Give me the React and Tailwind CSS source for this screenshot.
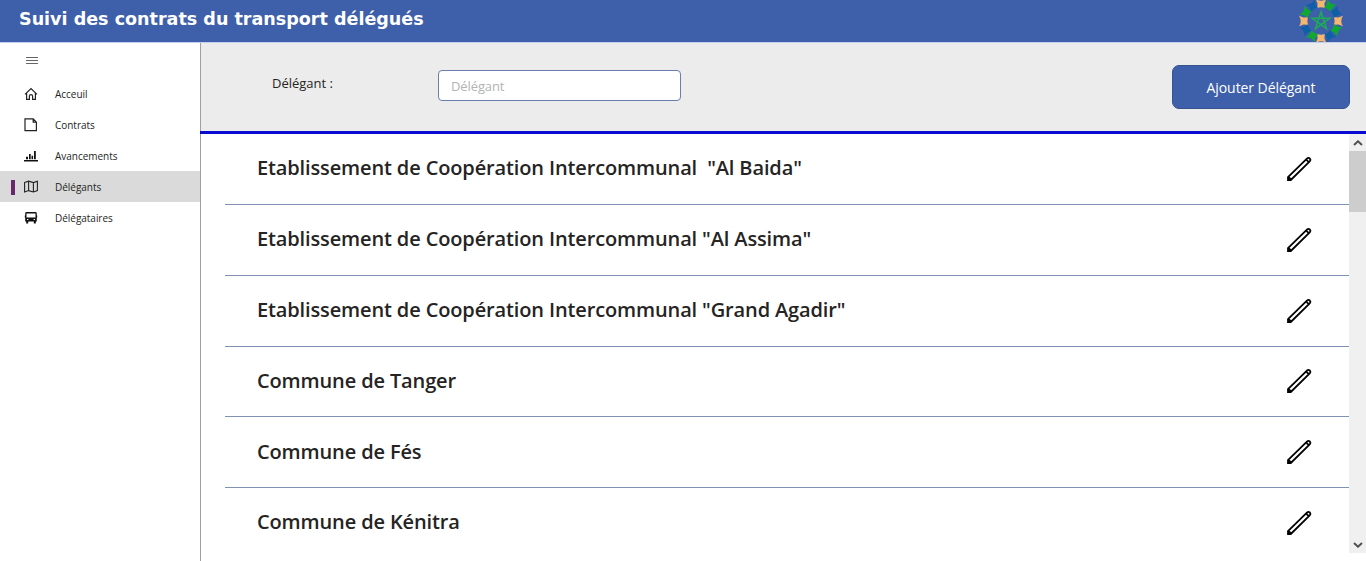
import React from "react";

const petalColors = ["#f5b670", "#0fa832", "#0f5fa8"];

function Emblem() {
  return (
    <svg className="h-[42px] w-[46px] shrink-0" viewBox="-23 -21 46 42">
      {Array.from({ length: 12 }, (_, i) => (
        <path
          key={i}
          d="M-5.3 -22 Q0 -18.4 5.3 -22 L3.4 -17.6 L3.8 -13 Q0 -14.4 -3.8 -13 L-3.4 -17.6 Z"
          fill={petalColors[i % 3]}
          transform={`rotate(${i * 30})`}
        />
      ))}
      <path d="M0 -9 L5.5 7.6 L-8.7 -2.7 H8.7 L-5.5 7.6 Z" fill="none" stroke="#1fab55" strokeWidth="1.6" />
    </svg>
  );
}

const icons = {
  home: (
    <path d="M1 7.4 L7 1.6 L13 7.4 M2.6 6.2 V12.4 H5.4 V9.2 Q5.4 7.6 7 7.6 Q8.6 7.6 8.6 9.2 V12.4 H11.4 V6.2" fill="none" stroke="#222" strokeWidth="1.2" />
  ),
  file: <path d="M1 0.9 H9.2 L12.4 4.2 V12.6 H1 Z M9.2 0.9 V4.2 H12.4" fill="none" stroke="#222" strokeWidth="1.2" />,
  chart: <path d="M0 11 H14 V12.4 H0 Z M2 7.8 H4 V10.2 H2 Z M5 5 H6.7 V10.2 H5 Z M7.5 6.8 H9.1 V10.2 H7.5 Z M10 2 H11.8 V10.2 H10 Z" fill="#111" />,
  map: <path d="M0.6 2.6 L4.6 1.2 L9.4 2.6 L13.4 1.2 V10.6 L9.4 12 L4.6 10.6 L0.6 12 Z M4.6 1.2 V10.6 M9.4 2.6 V12" fill="none" stroke="#222" strokeWidth="1.1" />,
  bus: (
    <path
      d="M2.6 1 H11.4 Q12.8 1 12.8 2.4 V4.4 H13.2 V6.6 H12.8 V10.6 H11.8 V12.4 H9.8 V10.6 H4.2 V12.4 H2.2 V10.6 H1.2 V6.6 H0.8 V4.4 H1.2 V2.4 Q1.2 1 2.6 1 Z M2.5 2.6 V6.4 H11.5 V2.6 Z M3 8 V9 H4.4 V8 Z M9.6 8 V9 H11 V8 Z"
      fill="#111"
      fillRule="evenodd"
    />
  ),
};

const menu = [
  ["home", "Acceuil"],
  ["file", "Contrats"],
  ["chart", "Avancements"],
  ["map", "Délégants"],
  ["bus", "Délégataires"],
];

const rows = [
  'Etablissement de Coopération Intercommunal  "Al Baida"',
  'Etablissement de Coopération Intercommunal "Al Assima"',
  'Etablissement de Coopération Intercommunal "Grand Agadir"',
  "Commune de Tanger",
  "Commune de Fés",
  "Commune de Kénitra",
];

function Pencil() {
  return (
    <svg className="h-[26px] w-[26px]" viewBox="0 0 26 26" fill="none" stroke="#000" strokeWidth="1.8">
      <path d="M2 24 V21.2 L20.9 2.6 Q22.4 1.3 23.8 2.5 Q25 3.9 23.7 5.3 L4.8 24 Z M2.4 20.8 L5.2 23.6 M20 3.4 L22.8 6.2" />
    </svg>
  );
}

export default function App() {
  return (
    <div className="flex h-[561px] w-[1366px] flex-col overflow-hidden bg-white font-['Open_Sans',sans-serif] text-[#252423]">
      <header className="flex h-[43px] shrink-0 items-start justify-between border-b border-[#c3cff0] bg-[#3e60aa] pr-[22px] pl-[19px]">
        <h1 className="pt-[7px] font-['DejaVu_Sans',sans-serif] text-[17.55px] leading-[24px] font-bold whitespace-nowrap text-white">
          Suivi des contrats du transport délégués
        </h1>
        <Emblem />
      </header>
      <div className="flex min-h-0 flex-1">
        <aside className="w-[200px] shrink-0">
          <div className="flex h-[35px] items-center pl-[26px]">
            <svg className="h-[9px] w-3" viewBox="0 0 12 9">
              <path d="M0 1.5 H12 M0 4.5 H12 M0 7.5 H12" stroke="#666" />
            </svg>
          </div>
          <nav>
            {menu.map(([icon, label]) => (
              <div key={label} className={`flex h-[31px] items-center pl-[11px] ${icon === "map" ? "bg-[#dadada]" : ""}`}>
                <span className={`mt-[2px] h-[15px] w-1 ${icon === "map" ? "bg-[#68286b]" : ""}`} />
                <svg className="ml-[9px] h-[14px] w-[14px]" viewBox="0 0 14 14">
                  {icons[icon]}
                </svg>
                <span className="ml-[17px] text-[10px] leading-[14px] tracking-[-0.03px]">{label}</span>
              </div>
            ))}
          </nav>
        </aside>
        <main className="flex min-w-0 flex-1 flex-col">
          <div className="flex h-[88px] shrink-0 items-start border-l border-[#a0a0a0] bg-[#ececec] pr-4 pl-[71px]">
            <label className="w-[166px] pt-[30px] text-[13px] leading-[20px]">Délégant :</label>
            <input
              className="mt-[27px] h-[31px] w-[243px] rounded-[4px] border border-[#6a7eae] bg-white px-3 text-[13px] tracking-[-0.1px] placeholder:text-[#b3b3b3]"
              placeholder="Délégant"
            />
            <button className="mt-[22px] ml-auto h-11 w-[178px] rounded-[7px] border border-[#37528f] bg-[#3e60aa] text-[14px] tracking-[-0.06px] text-white">
              Ajouter Délégant
            </button>
          </div>
          <div className="h-[3px] shrink-0 bg-[#0a0ad0]" />
          <div className="flex min-h-0 flex-1 border-l border-[#a0a0a0]">
            <div className="min-w-0 flex-1 overflow-hidden pl-6">
              {rows.map((row) => (
                <div
                  key={row}
                  className="flex h-[70.85px] items-center justify-between border-b border-[#8292b4] pr-[37px] pl-8 last:border-transparent"
                >
                  <span className="pb-[2.3px] text-[20px] leading-[27px] font-semibold tracking-[-0.13px] whitespace-pre">{row}</span>
                  <Pencil />
                </div>
              ))}
            </div>
            <div className="flex h-[419px] w-[17px] shrink-0 flex-col bg-[#f0f0f0]">
              <div className="flex h-[17px] items-center justify-center">
                <svg className="h-[6px] w-[10px]" viewBox="0 0 10 6">
                  <path d="M1 5 L5 1.3 L9 5" fill="none" stroke="#505050" strokeWidth="2" />
                </svg>
              </div>
              <div className="h-[61px] bg-[#cdcdcd]" />
              <div className="mt-auto flex h-[17px] items-center justify-center">
                <svg className="h-[6px] w-[10px]" viewBox="0 0 10 6">
                  <path d="M1 1 L5 4.7 L9 1" fill="none" stroke="#505050" strokeWidth="2" />
                </svg>
              </div>
            </div>
          </div>
        </main>
      </div>
    </div>
  );
}
